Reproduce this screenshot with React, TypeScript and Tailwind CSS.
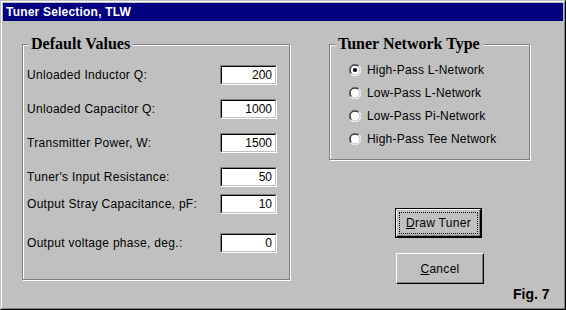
import React from "react";

const fields = [
  { label: "Unloaded Inductor Q:", value: "200", gap: "mt-0" },
  { label: "Unloaded Capacitor Q:", value: "1000", gap: "mt-[14px]" },
  { label: "Transmitter Power, W:", value: "1500", gap: "mt-[14px]" },
  { label: "Tuner's Input Resistance:", value: "50", gap: "mt-[14px]" },
  { label: "Output Stray Capacitance, pF:", value: "10", gap: "mt-[7px]" },
  { label: "Output voltage phase, deg.:", value: "0", gap: "mt-[19px]" },
];

const networks = [
  "High-Pass L-Network",
  "Low-Pass L-Network",
  "Low-Pass Pi-Network",
  "High-Pass Tee Network",
];

function Radio({ checked }: { checked: boolean }) {
  return (
    <svg width="12" height="12" viewBox="0 0 12 12" className="shrink-0">
      <circle cx="6" cy="6" r="5.5" fill="#fff" />
      <path d="M10.2 1.8 A5.5 5.5 0 0 0 1.8 10.2" fill="none" stroke="#808080" strokeWidth="1" />
      <path d="M9.5 2.5 A4.5 4.5 0 0 0 2.5 9.5" fill="none" stroke="#000" strokeWidth="1" />
      <path d="M1.8 10.2 A5.5 5.5 0 0 0 10.2 1.8" fill="none" stroke="#fff" strokeWidth="1" />
      <path d="M2.5 9.5 A4.5 4.5 0 0 0 9.5 2.5" fill="none" stroke="#c0c0c0" strokeWidth="1" />
      {checked && <circle cx="6" cy="6" r="2" fill="#000" />}
    </svg>
  );
}

function GroupBox({
  title,
  className,
  children,
}: {
  title: string;
  className: string;
  children: React.ReactNode;
}) {
  return (
    <div
      className={`relative border border-[#808080] shadow-[inset_1px_1px_0_#fff,1px_1px_0_#fff] ${className}`}
    >
      <span className="absolute left-[5px] -top-[10px] bg-[#c0c0c0] px-[3px] font-['Liberation_Serif',serif] text-[16px] font-bold leading-[18px] text-black">
        {title}
      </span>
      {children}
    </div>
  );
}

export default function App() {
  return (
    <div className="w-[566px] h-[310px] border border-t-[#c0c0c0] border-l-[#c0c0c0] border-r-black border-b-black bg-[#c0c0c0] font-['Liberation_Sans',Arial,sans-serif] text-black">
      <div className="h-full border border-t-white border-l-white border-r-[#808080] border-b-[#808080] p-px">
        <div className="h-[18px] bg-[#000080] pl-[3px] flex items-center text-[12px] font-bold tracking-[0.2px] text-white">
          Tuner Selection, TLW
        </div>

        <div className="flex pl-[19px] pt-[23px]">
          {/* Default values */}
          <GroupBox title="Default Values" className="w-[268px] h-[236px] pt-[20px] pl-[4px] pr-[12px]">
            {fields.map((f) => (
              <div key={f.label} className={`flex items-center justify-between h-[20px] ${f.gap}`}>
                <span className="text-[12px] leading-none tracking-[0.3px]">{f.label}</span>
                <div className="w-[57px] h-[20px] border border-t-[#808080] border-l-[#808080] border-r-white border-b-white">
                  <div className="h-full border border-t-black border-l-black border-r-[#c0c0c0] border-b-[#c0c0c0] bg-white pr-[3px] flex items-center justify-end text-[12px] leading-none">
                    {f.value}
                  </div>
                </div>
              </div>
            ))}
          </GroupBox>

          {/* Right column */}
          <div className="ml-[39px] flex flex-col">
            <GroupBox title="Tuner Network Type" className="w-[201px] h-[116px] pt-[19px] pl-[19px]">
              {networks.map((n, i) => (
                <div key={n} className={`flex items-center gap-[6px] h-[12px] ${i === 0 ? "" : "mt-[11px]"}`}>
                  <Radio checked={i === 0} />
                  <span className="text-[12px] leading-none tracking-[0.2px]">{n}</span>
                </div>
              ))}
            </GroupBox>

            <div className="ml-[66px] mt-[48px] w-[87px] h-[30px] border border-black">
              <div className="h-full border border-t-white border-l-white border-r-black border-b-black shadow-[inset_-1px_-1px_0_#808080] p-[2px]">
                <div className="h-full border border-dotted border-black flex items-center justify-center text-[12px] tracking-[0.3px]">
                  <span>
                    <span className="underline">D</span>raw Tuner
                  </span>
                </div>
              </div>
            </div>

            <div className="ml-[67px] mt-[15px] w-[88px] h-[31px] border border-t-white border-l-white border-r-black border-b-black shadow-[inset_-1px_-1px_0_#808080] flex items-center justify-center text-[12px] tracking-[0.3px]">
              <span>
                <span className="underline">C</span>ancel
              </span>
            </div>

            <div className="ml-[184px] mt-[3px] text-[14px] font-bold leading-none">Fig. 7</div>
          </div>
        </div>
      </div>
    </div>
  );
}
